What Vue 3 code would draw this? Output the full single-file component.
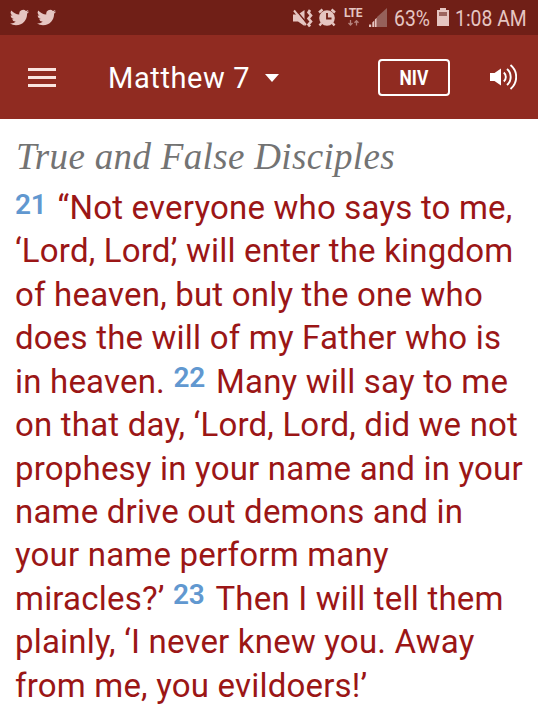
<template>
  <div class="reader">
    <header>
      <div class="status">
        <div class="notices">
          <svg v-for="n in 2" :key="n" class="bird" viewBox="0 0 24 24">
            <path :d="bird" />
          </svg>
        </div>
        <div class="system">
          <svg class="mute" width="20" height="20" viewBox="0 0 20 20">
            <path d="M0 6.500h5L11.500 2v16L5 13.500H0z" fill="currentColor" />
            <path d="M2 1l12 14.500" stroke="#701f17" stroke-width="1.600" />
            <path d="M1 2.500l12 14.500" stroke="currentColor" stroke-width="2" />
            <path d="M17 2l-1.500 2.500 2.500 3-2.500 3 2.500 3-2.500 3 1.500 2" fill="none" stroke="currentColor" stroke-width="2.600" />
          </svg>
          <svg class="alarm" width="18" height="19" viewBox="0 0 18 19">
            <circle cx="9" cy="10" r="7.800" fill="currentColor" />
            <path d="M1 4.500l3.500-3M17 4.500l-3.500-3M3.500 15l-2 2.500M14.500 15l2 2.500" stroke="currentColor" stroke-width="2.400" />
            <path d="M9 5v5.500h4.500" fill="none" stroke="#701f17" stroke-width="1.800" />
          </svg>
          <div class="lte">
            <span>LTE</span>
            <svg width="11" height="6" viewBox="0 0 11 6">
              <path d="M2.500 0v4M.500 3l2 2 2-2M8.500 5.500V1M6.500 2.700l2-2 2 2" fill="none" stroke="currentColor" stroke-width="1.300" />
            </svg>
          </div>
          <svg class="signal" width="18" height="19" viewBox="0 0 18 19">
            <path d="M8 9L18 0v19H8z" fill="#96605a" />
            <path d="M0 16.500h2.200V19H0zM3.300 14.500l2-2V19h-2zM5.900 11.600l1.800-1.800V19H5.900z" fill="currentColor" />
          </svg>
          <span class="percent">63%</span>
          <svg class="battery" width="12" height="18" viewBox="0 0 12 18">
            <path d="M3 0h6v2h3v16H0V2h3z" fill="currentColor" />
            <path d="M2 4h8v4H2z" fill="#9c655f" />
          </svg>
          <span class="clock">1:08 AM</span>
        </div>
      </div>
      <nav class="bar">
        <button class="menu" aria-label="Menu"><i></i><i></i><i></i></button>
        <button class="chapter">
          <span>Matthew 7</span>
          <i class="caret"></i>
        </button>
        <button class="version"><span>NIV</span></button>
        <button class="sound" aria-label="Listen">
          <svg width="28" height="28" viewBox="0 0 28 28">
            <path d="M1 10h4.500L12 5.500v17L5.500 18H1z" fill="#fff" />
            <path d="M14.800 9.500a6 6 0 0 1 0 9M18 6a10.500 10.500 0 0 1 0 16M21.500 2a15.500 15.500 0 0 1 0 24" fill="none" stroke="#fff" stroke-width="1.900" />
          </svg>
        </button>
      </nav>
    </header>

    <main>
      <h1>True and False Disciples</h1>
      <p v-for="(line, i) in lines" :key="i">
        <template v-for="(part, j) in line" :key="j">
          <sup v-if="typeof part === 'number'">{{ part }}</sup>
          <span v-else :class="{ tight: part.endsWith(',') && j < line.length - 1 }">{{ part }}</span>
        </template>
      </p>
    </main>
  </div>
</template>

<script setup>
const bird = 'M23.950 4.570a10 10 0 0 1-2.820.770 4.960 4.960 0 0 0 2.160-2.720 9.900 9.900 0 0 1-3.120 1.190 4.920 4.920 0 0 0-8.380 4.480C7.690 8.090 4.070 6.130 1.640 3.160a4.920 4.920 0 0 0 1.520 6.570 4.900 4.900 0 0 1-2.230-.610v.060a4.920 4.920 0 0 0 3.950 4.830 5 5 0 0 1-2.210.080 4.940 4.940 0 0 0 4.600 3.420A9.870 9.870 0 0 1 0 19.540a14 14 0 0 0 7.550 2.210c9.050 0 14-7.500 14-13.980 0-.210 0-.420-.020-.630a9.940 9.940 0 0 0 2.460-2.550z'

// one entry per line, numbers are verse markers
// a part that ends in a comma is kerned under the quote that follows
const lines = [
  [21, '“Not everyone who says to me,'],
  ['‘Lord, Lord,', '’ will enter the kingdom'],
  ['of heaven, but only the one who'],
  ['does the will of my Father who is'],
  ['in heaven. ', 22, 'Many will say to me'],
  ['on that day, ‘Lord, Lord, did we not'],
  ['prophesy in your name and in your'],
  ['name drive out demons and in'],
  ['your name perform many'],
  ['miracles?’ ', 23, 'Then I will tell them'],
  ['plainly, ‘I never knew you. Away'],
  ['from me, you evildoers!’']
]
</script>

<style>
body { margin: 0; background: #fff; }
</style>

<style scoped>
.reader {
  height: 717px;
  overflow: hidden;
  background: #fff;
  font-family: Roboto, "Liberation Sans", sans-serif;
}
button {
  background: none;
  border: none;
  padding: 0;
  color: #fff;
  font-family: inherit;
}
.status {
  display: flex;
  justify-content: space-between;
  box-sizing: border-box;
  height: 35px;
  padding: 0 11px 0 10px;
  background: #701f17;
  color: #e5c5c1;
}
.notices { display: flex; gap: 8px; padding-top: 8px; }
.bird { width: 19px; height: 19px; fill: currentColor; }
.system { display: flex; align-items: flex-start; }
.mute { margin: 8px 5px 0 0; }
.alarm { margin: 8px 7px 0 0; }
.lte { display: flex; flex-direction: column; align-items: center; width: 20px; margin: 8px 6px 0 0; }
.lte span { font-size: 12px; line-height: 11px; font-weight: 700; letter-spacing: -0.5px; }
.lte svg { opacity: .6; margin-top: 1px; }
.signal { margin: 8px 7px 0 0; }
.percent, .clock {
  font-size: 22px;
  line-height: 37px;
  white-space: nowrap;
  transform: scaleX(0.88);
  transform-origin: left;
}
.percent { width: 42px; }
.battery { margin: 8px 6px 0 1px; }
.clock { width: 72px; }

.bar {
  display: flex;
  align-items: center;
  box-sizing: border-box;
  height: 84px;
  padding: 0 21px 0 28px;
  background: #902b21;
}
.menu { display: flex; flex-direction: column; gap: 5px; width: 28px; margin-right: 52px; }
.menu i { height: 3px; background: #fbe4df; }
.chapter { display: flex; align-items: center; padding-top: 2px; font-size: 29px; letter-spacing: 0.6px; }
.caret {
  margin-left: 15px;
  border: 7.500px solid transparent;
  border-top: 8px solid #fff;
  border-bottom: 0;
}
.version {
  width: 72px;
  height: 37px;
  margin-left: auto;
  padding-top: 2px;
  border: 2px solid #fff;
  border-radius: 4px;
  font-size: 20.500px;
  font-weight: 700;
}
.version span { display: inline-block; transform: scaleX(0.85); }
.sound { width: 28px; height: 28px; margin-left: 39px; }

main { padding: 0 15px; }
h1 {
  margin: 18px 0 10px 1px;
  height: 39px;
  color: #737373;
  font: italic 400 37px/39px "Liberation Serif", serif;
  letter-spacing: 0.33px;
  white-space: nowrap;
}
p {
  margin: 0;
  height: 43.430px;
  color: #9b1616;
  font-size: 33px;
  line-height: 43.430px;
  letter-spacing: 0.2px;
  white-space: nowrap;
}
span { white-space: pre; }
.tight { margin-right: -6.500px; }
sup {
  margin-right: 11px;
  color: #6198d0;
  font-size: 28px;
  line-height: 0;
  font-weight: 600;
  letter-spacing: -0.2px;
  vertical-align: 5.500px;
}
</style>
